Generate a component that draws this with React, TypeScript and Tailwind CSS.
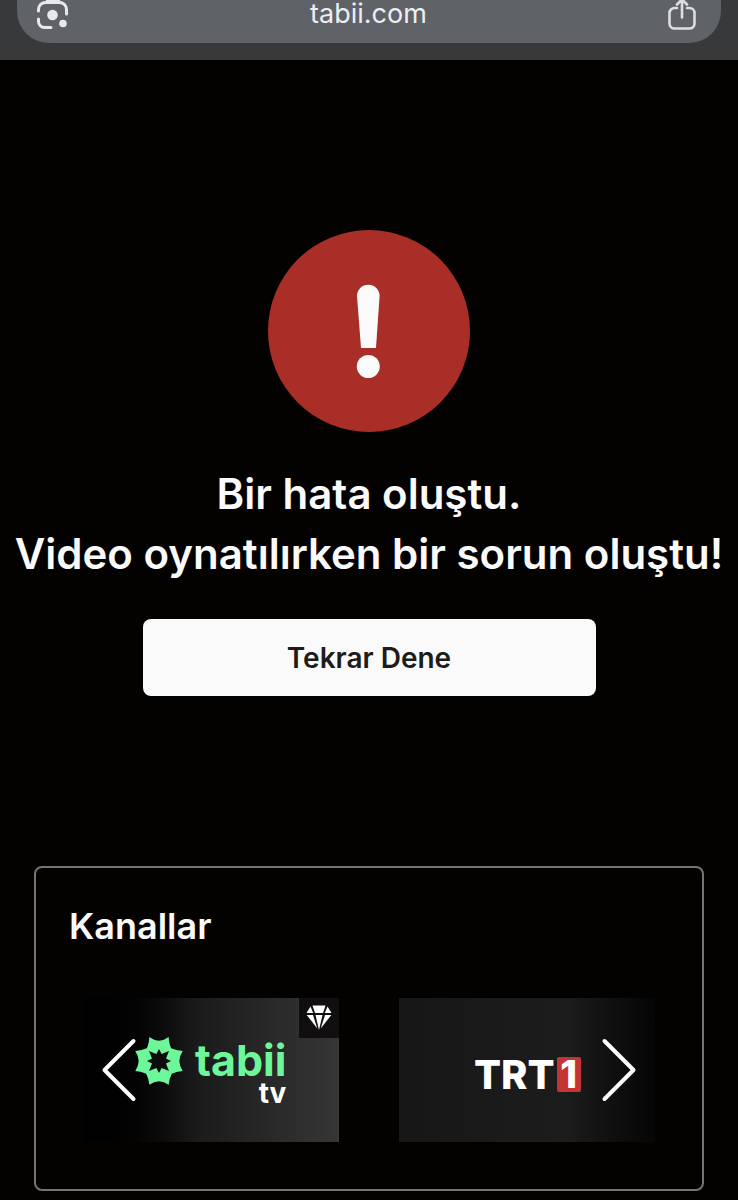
import type {ReactNode} from "react";

function LensIcon() {
    return (
        <svg className="w-8 h-9" viewBox="0 0 32 36" fill="none" stroke="#e8e9ee" strokeWidth="3"
             strokeLinecap="round" aria-hidden="true">
            <path d="M1.500 17V15.500a7 7 0 0 1 7-7h14a7 7 0 0 1 7 7V20"/>
            <path d="M1.500 25v2.500a6 6 0 0 0 6 6H14"/>
            <path d="M8 8l3-5h10l3 5z" fill="#e8e9ee" stroke="none"/>
            <circle cx="15.500" cy="21" r="5.300" fill="#e8e9ee" stroke="none"/>
            <circle cx="26" cy="29.500" r="3.800" fill="#e8e9ee" stroke="none"/>
        </svg>
    );
}

function ShareIcon() {
    return (
        <svg className="w-7 h-9" viewBox="0 0 28 36" fill="none" stroke="#dcdee3" strokeWidth="2.600"
             strokeLinecap="round" strokeLinejoin="round" aria-hidden="true">
            <path d="M9 14H6.500a5 5 0 0 0-5 5v10.500a5 5 0 0 0 5 5h15a5 5 0 0 0 5-5V19a5 5 0 0 0-5-5H19"/>
            <path d="M14 23.500V6M9 10.500l5-5 5 5"/>
        </svg>
    );
}

function TabiiStar() {
    return (
        <svg className="size-12" viewBox="-24 -24 48 48" aria-hidden="true">
            <path
                fill="#6ef79a"
                d="M-9.700-24Q-5-20.500 0-20.300Q5-20.500 9.700-24Q10-17 12.200-12.800Q17-10.500 23.700-10Q20.500-5 20.300 0Q20.500 5 23.700 10Q17 10.500 12.800 12.800Q10.500 17 9.700 23.700Q5 20.500 0 20.300Q-5 20.500-9.700 23.700Q-10.500 17-12.800 12.800Q-17 10.500-23.700 10Q-20.500 5-20.300 0Q-20.500-5-23.700-10Q-17-10.500-12.200-12.800Q-10-17-9.700-24Z"
            />
            <polygon
                fill="#0c0c0c"
                points="0,-12 2.600,-7 10,-10 7,-2.600 12,0 7,2.600 10,10 2.600,7 0,12 -2.600,7 -10,10 -7,2.600 -12,0 -7,-2.600 -10,-10 -2.600,-7"
            />
        </svg>
    );
}

function DiamondIcon() {
    return (
        <svg className="w-[26px] h-[26px]" viewBox="0 0 26 26" fill="#fff" aria-hidden="true">
            <path d="M6.500 0.500h13L17 8H9z"/>
            <path d="M4.500 1.500L7.200 8H0.500z"/>
            <path d="M21.500 1.500L25.500 8h-6.700z"/>
            <path d="M0.700 10h6.300l4.300 13.500z"/>
            <path d="M9.500 10h7L13 25z"/>
            <path d="M19 10h6.300L14.700 23.500z"/>
        </svg>
    );
}

function ChannelCard({label, className, children}: { label: string; className: string; children: ReactNode }) {
    return (
        <a href="#" aria-label={label} className={`relative flex-none w-64 h-36 bg-linear-to-r ${className}`}>
            {children}
        </a>
    );
}

export default function App() {
    return (
        <div className="min-h-screen bg-[#040200] text-[#fafafa] font-['Inter',sans-serif]">
            <header className="h-[60px] bg-[#38393b] px-[17px]">
                <div
                    className="flex h-[43px] items-start justify-between rounded-b-[32px] bg-[#5f6267] pl-5 pr-[25px]">
                    <button type="button" aria-label="Lens" className="-mt-[6px]"><LensIcon/></button>
                    <span className="text-[27px] leading-[28px] text-[#eceef2]">tabii.com</span>
                    <button type="button" aria-label="Paylaş" className="-mt-[6px]"><ShareIcon/></button>
                </div>
            </header>

            <main>
                <section className="flex flex-col items-center py-[170px]">
                    <svg className="size-[202px]" viewBox="0 0 202 202" aria-hidden="true">
                        <circle cx="101" cy="101" r="101" fill="#a82e27"/>
                        <path d="M89 66a11.300 11.300 0 0 1 22.600 0L108 118H93z" fill="#fafafa"/>
                        <circle cx="100.300" cy="136.500" r="11.500" fill="#fafafa"/>
                    </svg>
                    <h1 className="mt-8 text-center text-[42px] leading-[60px] font-semibold">
                        Bir hata oluştu.
                        <br/>
                        <span className="whitespace-nowrap">Video oynatılırken bir sorun oluştu!</span>
                    </h1>
                    <button type="button"
                            className="mt-[35px] h-[77px] w-[453px] rounded-lg bg-[#fafafa] text-[28px] font-semibold text-[#1c1c1c]">
                        Tekrar Dene
                    </button>
                </section>

                <section className="mx-[34px] rounded-lg border-2 border-[#757473] px-[33px] pt-[34px] pb-[34px]">
                    <h2 className="text-[36px] leading-[48px] font-semibold">Kanallar</h2>
                    <div className="relative mt-[35px] overflow-hidden">
                        <div className="flex gap-[60px] py-[13px] pl-[14px]">
                            <ChannelCard label="tabii tv" className="from-black via-[#1b1b1b] via-45% to-[#363636]">
                                <div className="flex pt-[39px] pl-[52px]">
                                    <TabiiStar/>
                                    <div className="ml-3 flex flex-col items-end pt-[2px] font-bold">
                                        <span className="text-[43px] leading-[42px] text-[#6ef79a]">tabii</span>
                                        <span className="text-[28px] leading-[24px] text-white">tv</span>
                                    </div>
                                </div>
                                <span
                                    className="absolute top-0 right-0 flex size-10 items-center justify-center bg-[#100e0e]">
                                    <DiamondIcon/>
                                </span>
                            </ChannelCard>
                            <ChannelCard label="TRT 1" className="from-[#171717] via-[#1c1c1c] via-65% to-[#060606]">
                                <div className="flex items-center gap-[2px] pt-[59px] pl-[75px] font-extrabold">
                                    <span className="text-[40px] leading-[35px] text-white">TRT</span>
                                    <span
                                        className="h-[35px] w-6 rounded-xs bg-[#c53434] text-center text-[38px] leading-[35px] text-white">1</span>
                                </div>
                            </ChannelCard>
                        </div>
                        <button type="button" aria-label="Önceki"
                                className="absolute inset-y-0 left-0 flex items-center pl-8">
                            <svg className="w-9 h-16" viewBox="0 0 36 64" fill="none" stroke="#fff" strokeWidth="4"
                                 strokeLinecap="round" strokeLinejoin="round">
                                <path d="M32.500 3L3.500 32l29 29"/>
                            </svg>
                        </button>
                        <button type="button" aria-label="Sonraki"
                                className="absolute inset-y-0 right-0 flex items-center pr-8">
                            <svg className="w-9 h-16" viewBox="0 0 36 64" fill="none" stroke="#fff" strokeWidth="4"
                                 strokeLinecap="round" strokeLinejoin="round">
                                <path d="M3.500 3l29 29-29 29"/>
                            </svg>
                        </button>
                    </div>
                </section>
            </main>
        </div>
    );
}
